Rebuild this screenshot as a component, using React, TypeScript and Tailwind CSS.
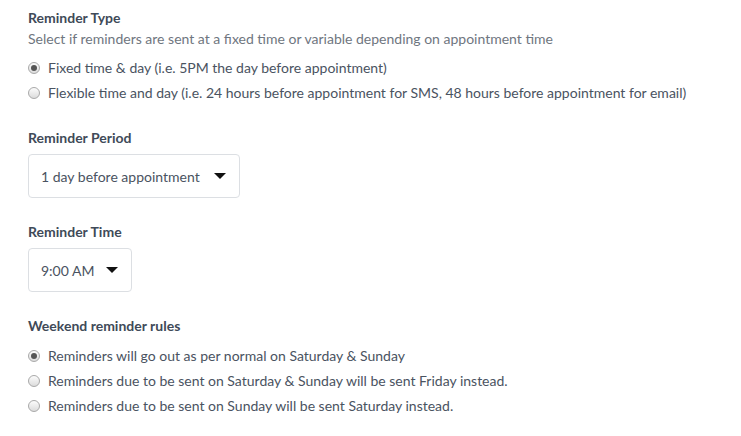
import React from 'react'

function Radio({ checked, label }: { checked?: boolean; label: string }) {
  return (
    <label className="flex h-[25px] items-center gap-[8px]">
      <span className="flex h-[12px] w-[12px] items-center justify-center rounded-full border border-[#a9a9a9] bg-gradient-to-b from-[#fcfcfc] to-[#dcdcdc]">
        {checked && <span className="h-[6px] w-[6px] rounded-full bg-[#555]" />}
      </span>
      <span className="text-[14px] text-[#4a5361]">{label}</span>
    </label>
  )
}

function Select({ value, width }: { value: string; width: string }) {
  return (
    <div
      className={`mt-[7px] flex h-[44px] items-center justify-between rounded-[4px] border border-[#dcdfe3] bg-white pl-[12px] pr-[12px] ${width}`}
    >
      <span className="text-[14px] text-[#4a5361]">{value}</span>
      <svg width="12" height="6" viewBox="0 0 12 6" className="mr-[1px]">
        <path d="M0 0h12L6 6z" fill="#111" />
      </svg>
    </div>
  )
}

function Heading({ children }: { children: React.ReactNode }) {
  return <h3 className="text-[14px] font-bold leading-[18px] text-[#404a58]">{children}</h3>
}

export default function App() {
  return (
    <div className="min-h-[436px] bg-white px-[28px] pt-[9px] font-['Lato',sans-serif]">
      <section>
        <Heading>Reminder Type</Heading>
        <p className="mt-[3px] text-[14px] leading-[18px] text-[#6f7680]">
          Select if reminders are sent at a fixed time or variable depending on appointment time
        </p>
        <div className="mt-[7px]">
          <Radio checked label="Fixed time & day (i.e. 5PM the day before appointment)" />
          <Radio label="Flexible time and day (i.e. 24 hours before appointment for SMS, 48 hours before appointment for email)" />
        </div>
      </section>

      <section className="mt-[24px]">
        <Heading>Reminder Period</Heading>
        <Select value="1 day before appointment" width="w-[212px]" />
      </section>

      <section className="mt-[25px]">
        <Heading>Reminder Time</Heading>
        <Select value="9:00 AM" width="w-[104px]" />
      </section>

      <section className="mt-[25px]">
        <Heading>Weekend reminder rules</Heading>
        <div className="mt-[8px]">
          <Radio checked label="Reminders will go out as per normal on Saturday & Sunday" />
          <Radio label="Reminders due to be sent on Saturday & Sunday will be sent Friday instead." />
          <Radio label="Reminders due to be sent on Sunday will be sent Saturday instead." />
        </div>
      </section>
    </div>
  )
}
